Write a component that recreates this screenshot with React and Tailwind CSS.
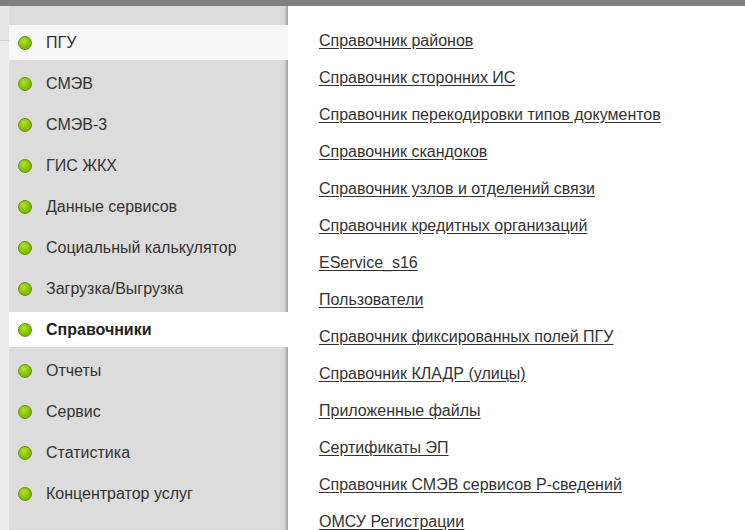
import React from 'react';

const menu = [
  { label: 'ПГУ', state: 'hover' },
  { label: 'СМЭВ' },
  { label: 'СМЭВ-3' },
  { label: 'ГИС ЖКХ' },
  { label: 'Данные сервисов' },
  { label: 'Социальный калькулятор' },
  { label: 'Загрузка/Выгрузка' },
  { label: 'Справочники', state: 'active' },
  { label: 'Отчеты' },
  { label: 'Сервис' },
  { label: 'Статистика' },
  { label: 'Концентратор услуг' },
];

const links = [
  'Справочник районов',
  'Справочник сторонних ИС',
  'Справочник перекодировки типов документов',
  'Справочник скандоков',
  'Справочник узлов и отделений связи',
  'Справочник кредитных организаций',
  'EService_s16',
  'Пользователи',
  'Справочник фиксированных полей ПГУ',
  'Справочник КЛАДР (улицы)',
  'Приложенные файлы',
  'Сертификаты ЭП',
  'Справочник СМЭВ сервисов Р-сведений',
  'ОМСУ Регистрации',
];

function Dot() {
  return (
    <span className="w-[14px] h-[14px] rounded-full shrink-0 border border-[#5f9400] bg-[radial-gradient(circle_at_40%_35%,#b4e030_0%,#86c000_55%,#6aa000_100%)]" />
  );
}

export default function App() {
  return (
    <div
      className="w-[745px] h-[530px] overflow-hidden bg-white flex flex-col text-[#333]"
      style={{ fontFamily: '"Liberation Sans", Arial, sans-serif' }}
    >
      <div className="h-[6px] bg-[#808080] shrink-0" />
      <div className="flex flex-1 min-h-0">
        <div className="w-[9px] shrink-0 bg-[#ececec]">
          <div className="h-[35px] border-b border-[#d4d4d4] bg-[#e6e6e6]" />
        </div>
        <div className="w-[279px] shrink-0 bg-[#dcdcdc] shadow-[inset_-4px_0_3px_-2px_rgba(0,0,0,0.28)] pt-[19px] flex flex-col gap-[6px]">
          {menu.map((m) => (
            <div
              key={m.label}
              className={`h-[35px] flex items-center pl-[9px] gap-[14px] text-[16px] ${
                m.state === 'active'
                  ? 'bg-white font-bold text-[#222]'
                  : m.state === 'hover'
                  ? 'bg-[#f7f7f7]'
                  : ''
              }`}
            >
              <Dot />
              <span>{m.label}</span>
            </div>
          ))}
        </div>
        <div className="flex-1 pt-[26px] pl-[31px] flex flex-col gap-[19px]">
          {links.map((l) => (
            <a
              key={l}
              href="#"
              className="text-[16px] leading-[18px] text-[#333] underline underline-offset-2 w-fit whitespace-nowrap"
            >
              {l}
            </a>
          ))}
        </div>
      </div>
    </div>
  );
}
